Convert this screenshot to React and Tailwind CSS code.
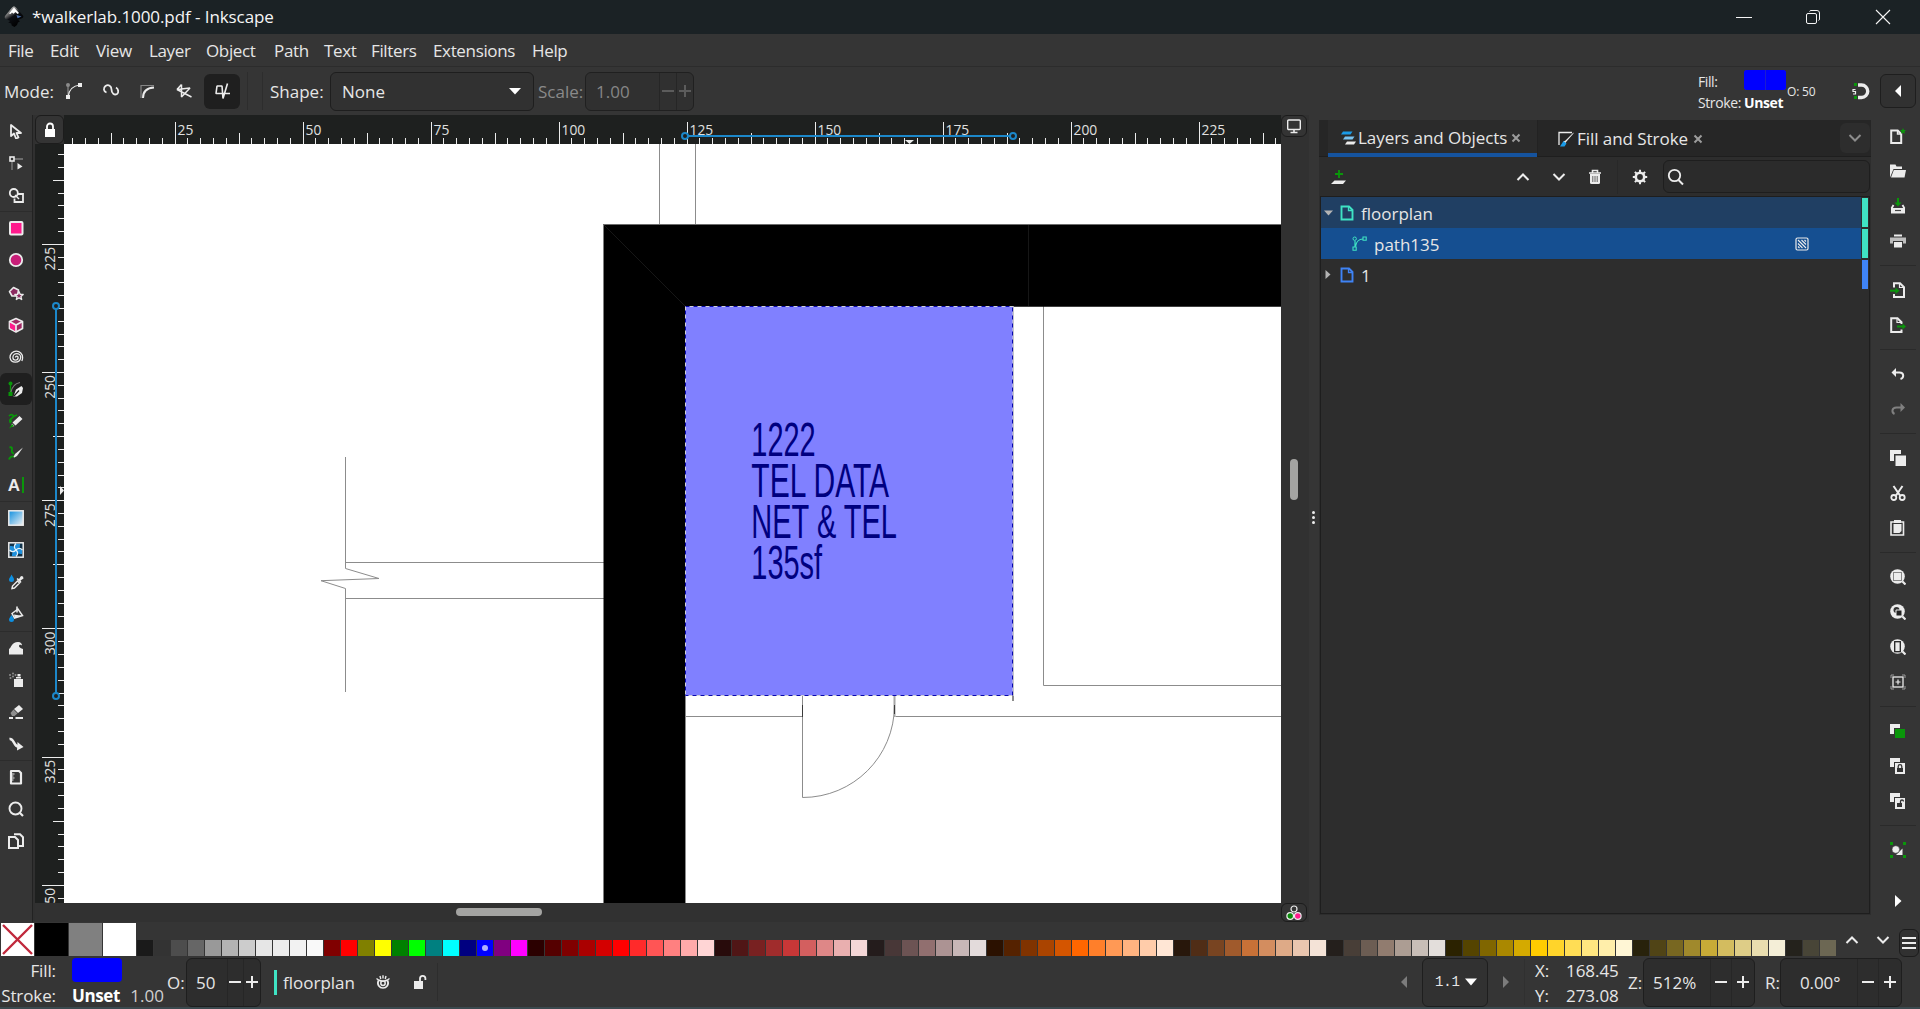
import React from "react";

const PALETTE = (
  "1a1a1a 333333 4d4d4d 666666 999999 b3b3b3 cccccc e6e6e6 ececec f2f2f2 f9f9f9 " +
  "800000 ff0000 808000 ffff00 008000 00ff00 008080 00ffff 000080 0000ff 800080 ff00ff " +
  "2b0000 550000 800000 aa0000 d40000 ff0000 ff2a2a ff5555 ff8080 ffaaaa ffd5d5 " +
  "280b0b 501616 782121 a02c2c c83737 d35f5f de8787 e9afaf f4d7d7 " +
  "241c1c 483737 6c5353 916f6f ac9393 c8b7b7 e3dbdb " +
  "2b1100 552200 803300 aa4400 d45500 ff6600 ff7f2a ff9955 ffb380 ffccaa ffe6d5 " +
  "28170b 502d16 784421 a05a2c c87137 d38d5f deaa87 e9c6af f4e3d7 " +
  "241f1c 483e37 6c5d53 917c6f ac9d93 c8beb7 e3dedb " +
  "2b2200 554400 806600 aa8800 d4aa00 ffcc00 ffd42a ffdd55 ffe680 ffeeaa fff6d5 " +
  "28220b 504416 786721 a0892c c8ab37 d3bc5f decd87 e9ddaf f4eed7 " +
  "24221c 484537 6c6753"
).split(" ");

const W = "#ececec";
const G = "#0a960a";

function Svg({ s = 16, w, h, children, className = "" }) {
  return (
    <svg
      width={w || s}
      height={h || s}
      viewBox={`0 0 ${w || s} ${h || s}`}
      fill="none"
      className={"block shrink-0 " + className}
    >
      {children}
    </svg>
  );
}

/* ---------- title bar ---------- */

function TitleBar() {
  return (
    <div className="flex h-[34px] items-center bg-[#1b2225] pl-1 text-[#f5f5f5]">
      <Svg w={20} h={22}>
        <defs>
          <linearGradient id="ink" x1="0" y1="0" x2="0.6" y2="1">
            <stop offset="0" stopColor="#fff" />
            <stop offset="0.35" stopColor="#777" />
            <stop offset="0.55" stopColor="#0b0d12" />
            <stop offset="1" stopColor="#000" />
          </linearGradient>
        </defs>
        <path d="M10 0.5c1 0 1.7.6 2.5 1.5l6.3 7.3c1 1.3.7 2.4-.8 3l-4 1.4 2 1.6-2 1.2-1 2.5-2.5 2-2.8-1.5-.5-2-3-1 2-1.6-4.200-1.900C.6 12.300.3 10.600 1.400 9.400L7.600 2C8.300 1.100 9 .5 10 .5z" fill="url(#ink)" />
        <path d="M10 1.500 5 7.500l1.500.5L8 6.500l1.500 1.200L11.500 6l2 2 1.500-1z" fill="#fff" />
        <path d="m12.500 9 5 1.500-4 1.800z" fill="#4a6ea8" />
      </Svg>
      <span className="ml-[8px] text-[17px] tracking-[-0.08px]">*walkerlab.1000.pdf - Inkscape</span>
      <div className="ml-auto flex items-center">
        <Svg w={16} h={16}><path d="M0 8.500h16" stroke="#f5f5f5" /></Svg>
        <Svg w={16} h={16} className="ml-[53px]">
          <rect x="1.500" y="4.500" width="10" height="10" rx="1.500" stroke="#f5f5f5" />
          <path d="M4.500 2.500q.4-1 1.500-1h6q2.500 0 2.500 2.500v6q0 1.100-1 1.500" stroke="#f5f5f5" />
        </Svg>
        <Svg w={16} h={16} className="mr-[29px] ml-[54px]"><path d="M1 1l14 14M15 1 1 15" stroke="#f5f5f5" strokeWidth="1.100" /></Svg>
      </div>
    </div>
  );
}

/* ---------- menu ---------- */

function MenuBar() {
  return (
    <div className="flex h-[33px] items-center border-b border-[#2c2c2c] pt-[2px] pl-[8px] text-[17px] tracking-[-0.35px]">
      <span className="w-[42px]">File</span>
      <span className="w-[46px]">Edit</span>
      <span className="w-[53px]">View</span>
      <span className="w-[57px]">Layer</span>
      <span className="w-[68px]">Object</span>
      <span className="w-[50px]">Path</span>
      <span className="w-[47px]">Text</span>
      <span className="w-[62px]">Filters</span>
      <span className="w-[99px]">Extensions</span>
      <span>Help</span>
    </div>
  );
}

/* ---------- tool options ---------- */

function PlusMinus({ gap, dim }) {
  const c = dim ? "#5c5c5c" : W;
  return gap ? (
    <>
      <div className="flex w-[21px] items-center justify-center self-stretch border-l border-[#262626]">
        <Svg s={14}><path d="M1 7h12" stroke={c} strokeWidth="2" /></Svg>
      </div>
      <div className="flex w-[23px] items-center justify-center self-stretch border-l border-[#262626]">
        <Svg s={14}><path d="M1 7h12M7 1v12" stroke={c} strokeWidth="2" /></Svg>
      </div>
    </>
  ) : (
    <>
      <div className="flex w-[17px] items-center justify-center self-stretch border-l border-[#262626]">
        <Svg s={14}><path d="M1 7h12" stroke={c} strokeWidth="2" /></Svg>
      </div>
      <div className="flex w-[17px] items-center justify-center self-stretch border-l border-[#262626]">
        <Svg s={14}><path d="M1 7h12M7 1v12" stroke={c} strokeWidth="2" /></Svg>
      </div>
    </>
  );
}

function ToolOptions() {
  return (
    <div className="flex h-[48px] items-center pl-1 text-[17px]">
      <span className="w-[61px] pt-px">Mode:</span>
      <Svg s={18}>
        <path d="M3 15V4" stroke="#8b8b8b" strokeWidth="1.200" />
        <circle cx="3" cy="3" r="2" fill="#8b8b8b" />
        <path d="M3 15C4 7 9 3.500 15 3" stroke={W} strokeWidth="1.200" />
        <path d="M1 13h4v4H1zM13 1h4v4h-4z" fill={W} />
      </Svg>
      <Svg s={18} className="ml-[19px]">
        <path d="M4.500 10.500C1.500 9.500 1 6 3.500 4c3-2 6 0 6 3.500 0 4 3 6 5.500 4.500 2-1.500 1.500-5-1-6.500" stroke={W} strokeWidth="1.800" />
      </Svg>
      <Svg s={18} className="ml-[18px]">
        <path d="M3 16V3.500h13" stroke="#858585" strokeWidth="1.200" />
        <path d="M5 16c0-6 3-10 11-10.500" stroke={W} strokeWidth="2" />
      </Svg>
      <Svg s={18} className="ml-[19px]">
        <path d="M2 7.500 16.500 15M6.500 2.500v12.500L15 6 2 7.500 6.500 2.500" stroke={W} strokeWidth="1.500" strokeLinejoin="bevel" />
      </Svg>
      <div className="ml-[11px] flex h-[35px] w-[36px] items-center justify-center rounded-md bg-[#1f1f1f]">
        <Svg s={18}>
          <path d="M14.500 1.500 10 16.500 9 4H4L3 11.500h14" stroke={W} strokeWidth="1.600" strokeLinejoin="bevel" />
        </Svg>
      </div>
      <div className="ml-[7px] h-[38px] w-4 border-x border-[#2d2d2d]" />
      <span className="ml-[7px] w-[60px] pt-px">Shape:</span>
      <div className="flex h-[39px] w-[204px] items-center rounded-md border border-[#1e1e1e] bg-[#313131] px-[11px]">
        <span className="pt-px">None</span>
        <Svg w={14} h={8} className="ml-auto"><path d="M1 1h12L7 7.500z" fill="#fff" /></Svg>
      </div>
      <span className="ml-[4px] w-[47px] pt-px text-[#8a8a8a]">Scale:</span>
      <div className="flex h-[39px] w-[109px] items-center rounded-md border border-[#202020] bg-[#303030] pl-[10px] text-[#868686]">
        <span className="mr-auto pt-px">1.00</span>
        <PlusMinus dim />
      </div>
      <div className="ml-auto flex items-center">
        <div className="grid w-[46px] gap-0 pt-px text-[14px] leading-[21px] tracking-[-0.4px]">
          <span>Fill:</span>
          <span>Stroke:</span>
        </div>
        <div className="w-[42px] text-[14px]">
          <div className="flex h-[20px] gap-px overflow-hidden rounded-[3px] bg-[#1c1cd0]">
            <div className="flex-1 bg-[#0000ff]" />
            <div className="flex-1 bg-[#0000ff]" />
          </div>
          <div className="h-[22px] pt-[3px] leading-[20px] font-bold tracking-[-0.4px] text-white">Unset</div>
        </div>
        <span className="ml-[1px] w-[63px] pt-px text-[12px] tracking-[-0.2px]">O: 50</span>
        <Svg s={20} className="mr-[10px]">
          <path d="M8 4h3.500a6 6 0 0 1 0 12.500H8" stroke={W} strokeWidth="3.400" />
          <path d="M5.500 8.500H3v2h2.500V13H3" stroke={W} strokeWidth="1.200" />
          <path d="M4 2h3v3H4zM4 15h3v3H4z" fill={G} />
        </Svg>
        <div className="mr-[4px] flex h-[34px] w-[36px] items-center justify-center rounded-md border border-[#1e1e1e] bg-[#313131]">
          <Svg w={8} h={12}><path d="M7 0v12L1 6z" fill="#fff" /></Svg>
        </div>
      </div>
    </div>
  );
}

/* ---------- toolbox ---------- */

const TOOLS = [
  <g><path d="M3 2v11l3-2.500 2 5 2.500-1L8.500 10H13z" stroke={W} strokeWidth="1.800" strokeLinejoin="round" /></g>,
  <g><path d="M5 4h10M4 5v10" stroke="#808080" strokeWidth="1.300" /><rect x="2" y="2" width="4" height="4" fill="#353535" stroke={W} strokeWidth="1.600" /><path d="m9.500 8 5 3.500-5 3z" fill={W} /></g>,
  <g><circle cx="5.800" cy="6" r="4" stroke={W} strokeWidth="1.800" /><path d="M10 7h5v8H6.500v-3.500" stroke={W} strokeWidth="1.800" /><path d="m7 8 4 4" stroke={W} strokeWidth="1.500" /></g>,
  <g><rect x="2" y="2" width="12.500" height="12.500" rx="1" fill="#ff1a8c" stroke={W} strokeWidth="2" /></g>,
  <g><circle cx="8" cy="8" r="6.200" fill="#c81e78" stroke={W} strokeWidth="1.800" /></g>,
  <g><path d="M5.500 2.500 10.500 5l-1 6H4L1.500 6.500z" fill="#8c2a60" stroke={W} strokeWidth="1.600" strokeLinejoin="round" /><path d="m11 6.500 1.200 2.800 3 .2-2.300 2 .8 3-2.700-1.600-2.700 1.600.8-3-2.300-2 3-.2z" fill="#8c2a60" stroke={W} strokeWidth="1.300" strokeLinejoin="round" /></g>,
  <g><path d="M8 1.500 14.500 4.500v7L8 15l-6.500-3.500v-7z" fill="#a02864" stroke={W} strokeWidth="1.700" strokeLinejoin="round" /><path d="M1.800 5 8 8v6.500L2 11z" fill="#ff1a8c" /><path d="M1.500 4.500 8 8l6.500-3.500M8 8v7" stroke={W} strokeWidth="1.700" /></g>,
  <g><path d="M7.500 8.500a1.300 1.300 0 0 1 2.600 0a2.600 2.600 0 0 1-5.200 0a3.900 3.900 0 0 1 7.800 0a5.400 5.400 0 0 1-10.700 0a6.300 6.300 0 0 1 12.600 0c0 1.500-.3 2.500-.8 3.500" stroke={W} strokeWidth="1.300" /></g>,
  <g><path d="M2.500 3v11" stroke={G} strokeWidth="1.400" /><path d="M.500 11h4v4h-4z" fill={G} /><circle cx="2.500" cy="2.500" r="2" fill={G} /><path d="M3 11C4 6 7 2.500 12 1.500" stroke="#777" strokeWidth="1.200" /><path d="M5.500 15.500 8 8.500l5.500-3.500 1.500 2-1 5-5 3.500z" fill={W} /><path d="m6 15 5-5.500" stroke="#1f1f1f" strokeWidth="1.200" /></g>,
  <g><path d="M1 3c3-3 6 0 3 2s-3 4 0 3M9 2c-5 1-9 7-6 8" stroke={G} strokeWidth="1.700" /><path d="m11.500 3 3 3-7 6.500-3-3zM4 10.500l2.500 2.500L3 14z" fill={W} /><path d="M1 15.500 4 11l2 2z" fill={G} /></g>,
  <g><path d="M1.500 2.500C7 1 1 8 6 8.500M1 14.500c1-4 4-3 6-3" stroke={G} strokeWidth="1.900" /><path d="M15 2.500 9 11l-2.500 1.500L5.500 12 7 9z" fill={W} /></g>,
  null,
  <g><rect x=".800" y=".800" width="14.400" height="14.400" fill="url(#gr)" stroke={W} strokeWidth="1.500" /></g>,
  <g><rect x=".800" y=".800" width="14.400" height="14.400" fill="#12334a" stroke={W} strokeWidth="1.500" /><path d="M8 8C8 5 6 4 2 4v4c2 2 4 2 6 0zM8 8c3 0 4-2 4-6H8C6 4 6 6 8 8zM8 8c0 3 2 4 6 4V8c-2-2-4-2-6 0zM8 8c-3 0-4 2-4 6h4c2-2 2-4 0-6z" fill="#1e90dc" /><path d="M8 1.500c-2.500 2.500-2 4.500 0 6.500s2.500 4 0 6.500M1.500 8c2.500 2.500 4.500 2 6.500 0s4-2.500 6.500 0" stroke="#e5f3fb" strokeWidth="1.200" /></g>,
  <g><path d="M3.500.500C5 3 6 4 6 5.500a2.500 2.500 0 0 1-5 0C1 4 2.500 3 3.500.500z" fill="#0e8fe0" /><path d="m4 14.500.5-2.500 5-5 2 2-5 5z" stroke={W} strokeWidth="1.400" /><path d="m8.500 5 1-1 1.500 1 2-3 2 .5.500 2-3 2 1 1.500-1 1z" fill={W} /></g>,
  <g><path d="m4 7.500 6-4.500 4.500 6.500L6.500 12z" stroke={W} strokeWidth="1.500" /><path d="m6 8.500 7.500 1.200-7 2z" fill={W} /><path d="M9 .5v6" stroke={W} strokeWidth="1.600" /><path d="M3.500 9C4.500 11 6 12 6 13.500a2.500 2.500 0 0 1-5 0C1 12 2.500 11 3.500 9z" fill="#0e8fe0" /></g>,
  <g><path d="M1 14.500V9C3 8.500 3.500 2 10 2c3 0 4 2 4 3.500-1-1.200-3-1-3 .5 0 2 4 3 4 3v5.500z" fill={W} /></g>,
  <g><path d="M6 7h9v8H6zM8 5h5v1.500H8zM9.500 2h3v2.500h-3z" fill={W} /><g fill="#8f8f8f"><circle cx="2" cy="3" r="1" /><circle cx="5" cy="1.500" r="1" /><circle cx="5" cy="4.500" r="1" /><circle cx="7.500" cy="3" r="1" /><circle cx="2.500" cy="6" r="1" /></g></g>,
  <g><path d="m6 5 5-4 4 4-5 4z" fill={W} /><path d="m5.500 5.500 4 4-3 2.500H4L2.500 9z" fill="#8f8f8f" /><path d="M1 14h4M7.500 14H15" stroke={W} strokeWidth="2" /></g>,
  <g><path d="M1.500 3c5-1 4 8 9 7.500" stroke={W} strokeWidth="2.400" /><path d="m9.500 6 6 5-6.500 3.500z" fill={W} /></g>,
  <g><path d="M3 2h8l2 2v10.500H3z" stroke={W} strokeWidth="2.200" strokeLinejoin="round" /><path d="M3 5h3.500M3 7h2.500M3 9h3.500M3 11h2.500" stroke={W} /></g>,
  <g><circle cx="7.500" cy="7.500" r="6" stroke={W} strokeWidth="1.900" /><path d="m12 12 3 3" stroke={W} strokeWidth="2.200" /></g>,
  <g><path d="M1 4h6l3 3v8H1z" stroke={W} strokeWidth="2" /><path d="M6 1.200h6l3 3V13h-4" stroke={W} strokeWidth="2" /></g>,
];

function Tool({ i }) {
  return (
    <div className={"flex h-[32.1px] items-center justify-center " + (i === 8 ? "rounded-md bg-[#1f1f1f]" : "")}>
      {i === 11 ? (
        <div className="flex items-center gap-[2px]">
          <span className="font-['Liberation_Sans'] text-[17px] leading-none font-bold text-[#ececec]">A</span>
          <div className="h-4 w-[2px] bg-[#0a960a]" />
        </div>
      ) : (
        <Svg s={16}>{TOOLS[i]}</Svg>
      )}
    </div>
  );
}

function Toolbox() {
  const range = (a, b) => Array.from({ length: b - a }, (_, k) => <Tool key={k} i={a + k} />);
  return (
    <div className="w-[33px] shrink-0 border-r border-[#222222]">
      <svg className="absolute h-0 w-0">
        <defs>
          <linearGradient id="gr" x1="0" y1="0" x2="1" y2="1">
            <stop offset="0" stopColor="#0e8fe0" />
            <stop offset="1" stopColor="#f2f2f2" />
          </linearGradient>
        </defs>
      </svg>
      {range(0, 3)}
      <div className="h-px bg-[#2c2c2c]" />
      {range(3, 12)}
      <div className="h-px bg-[#2c2c2c]" />
      {range(12, 16)}
      <div className="h-px bg-[#2c2c2c]" />
      {range(16, 20)}
      <div className="h-px bg-[#2c2c2c]" />
      {range(20, 23)}
    </div>
  );
}

/* ---------- rulers ---------- */

const RULER_FONT = "'Open Sans', 'Noto Sans', sans-serif";

function HRuler() {
  const ticks = [];
  for (let k = -8; k < 90; k++) {
    const x = Math.round(110.5 + 12.8 * k) + 0.5;
    const y = k % 10 === 0 ? 7 : k % 5 === 0 ? 18 : 23;
    if (x > 0) ticks.push(<path key={k} d={`M${x} ${y}V29`} stroke={W} />);
  }
  return (
    <Svg w={1217} h={29} className="bg-[#1e201f]">
      {ticks}
      {[25, 50, 75, 100, 125, 150, 175, 200, 225].map((n, i) => (
        <text key={n} x={113.5 + 128 * i} y={20} fontSize="13.8" fontFamily={RULER_FONT} fill="#e0e0e0" textLength={String(n).length * 7.9} lengthAdjust="spacingAndGlyphs">{n}</text>
      ))}
      <path d="M624 21H946" stroke="#1c87c9" strokeWidth="2" />
      <circle cx="621" cy="21" r="3" stroke="#1c87c9" strokeWidth="2" />
      <circle cx="949" cy="21" r="3" stroke="#1c87c9" strokeWidth="2" />
      <path d="M841 25h9l-4.500 4z" fill={W} />
    </Svg>
  );
}

function VRuler() {
  const ticks = [];
  for (let k = -8; k < 60; k++) {
    const y = Math.round(99.800 + 12.82 * k) + 0.5;
    const x = k % 10 === 0 ? 7 : k % 5 === 0 ? 18 : 23;
    if (y > 2) ticks.push(<path key={k} d={`M${x} ${y}H29`} stroke={W} />);
  }
  return (
    <Svg w={29} h={759} className="bg-[#1e201f]">
      {ticks}
      {[225, 250, 275, 300, 325, 350].map((n, i) => (
        <text key={n} transform={`translate(20 ${126.500 + 128.200 * i}) rotate(-90)`} fontSize="14.500" fontFamily={RULER_FONT} fill="#e0e0e0" textLength="23.500" lengthAdjust="spacingAndGlyphs">{n}</text>
      ))}
      <path d="M21 165V549" stroke="#1c87c9" strokeWidth="2" />
      <circle cx="21" cy="162" r="3" stroke="#1c87c9" strokeWidth="2" />
      <circle cx="21" cy="552" r="3" stroke="#1c87c9" strokeWidth="2" />
      <path d="M25 342v9l4-4.500z" fill={W} />
    </Svg>
  );
}

/* ---------- drawing canvas ---------- */

function Canvas() {
  return (
    <svg width="1217" height="759" viewBox="64 144 1217 759" fill="none" className="block shrink-0 bg-white">
      <g stroke="#8c8c8c">
        <path d="M659.500 144V225M695.500 144V225" />
        <path d="M345.500 457V568.500L379 578.500 321 580.700 345.500 588.500V692M345.500 562.500H604M345.500 598.500H604" />
        <path d="M1043.500 306V685.500H1281" />
        <path d="M685 716.500H802.500M895.500 716.500H1281M802.500 695V797.500C853 797.500 894.500 757 894.500 705" />
        <path d="M894.500 695V717" stroke="#a5a5a5" strokeWidth="2" />
        <path d="M802.500 705V717M894.500 705V714" stroke="#3a3a3a" />
        <path d="M685.500 695V903" />
        <path d="M1013 695.500V701" strokeWidth="2" />
      </g>
      <path d="M603.500 224.500H1281V306.700H685V903H603.500z" fill="#000" />
      <path d="M603 224.500H1281" stroke="#6c6c6c" />
      <path d="M604 225 685 306M1028.500 225V306" stroke="#161616" />
      <rect x="685.500" y="306.500" width="327.500" height="389" fill="#8080ff" />
      <rect x="685.500" y="306.500" width="327.500" height="389" stroke="#d0d0d8" />
      <path d="M1013.500 306.500V695.500" stroke="#c4c4c8" />
      <path d="M685.500 306.500H1012.500V695.500H685.500z" stroke="#0a0ab0" strokeDasharray="4 4" />
      <g fill="#000080" fontFamily="'Liberation Sans', Arial, sans-serif" fontSize="47.500">
        <text transform="translate(751.300 456) scale(.61 1)">1222</text>
        <text transform="translate(751.300 497) scale(.632 1)">TEL DATA</text>
        <text transform="translate(751.300 538.200) scale(.611 1)">NET &amp; TEL</text>
        <text transform="translate(751.300 579.400) scale(.61 1)">135sf</text>
      </g>
    </svg>
  );
}

function Workspace() {
  return (
    <div className="grid shrink-0 grid-cols-[29px_1217px_28px] grid-rows-[29px_759px_19px] bg-[#313131]">
      <div className="flex items-center justify-center rounded-md border border-[#1c1c1c] bg-[#343434]">
        <Svg w={12} h={16}>
          <path d="M1 7h10v8H1z" fill="#fff" />
          <path d="M3 7.500V4.500a3 3 0 0 1 6 0v3" stroke="#fff" strokeWidth="1.800" />
        </Svg>
      </div>
      <HRuler />
      <div className="mr-[2px] mb-[7px] flex items-center justify-center rounded-md border border-[#1c1c1c] bg-[#343434]">
        <Svg w={16} h={16}>
          <rect x="1.700" y="2" width="12.600" height="9.500" rx="1" stroke={W} strokeWidth="1.400" />
          <path d="M8 11v3M4.500 14.500h7" stroke={W} strokeWidth="1.600" />
        </Svg>
      </div>
      <VRuler />
      <Canvas />
      <div className="flex justify-center pt-[315px] pr-[3px]">
        <div className="h-[41px] w-2 rounded-full bg-[#a4a4a2]" />
      </div>
      <div />
      <div className="flex pt-[5px] pl-[392px]">
        <div className="h-2 w-[86px] rounded-full bg-[#a4a4a2]" />
      </div>
      <div className="mr-[2px] flex items-center justify-center rounded-md border border-[#1c1c1c] bg-[#343434]">
        <Svg w={16} h={16}>
          <circle cx="8" cy="4" r="3" stroke={W} strokeWidth="1.200" />
          <circle cx="4.200" cy="11" r="3.300" fill="#0a8a0a" stroke={W} strokeWidth="1.200" />
          <circle cx="11.800" cy="11" r="3.300" fill="#ff1a8c" stroke={W} strokeWidth="1.200" />
        </Svg>
      </div>
    </div>
  );
}

/* ---------- dock ---------- */

function Chevron({ up, c = W, w = 14, sw = 2 }) {
  return (
    <Svg w={w} h={8}>
      <path d={up ? "M1.500 7 7 1.500 12.500 7" : "M1.500 1 7 6.500 12.500 1"} stroke={c} strokeWidth={sw} />
    </Svg>
  );
}

function CloseX({ className }) {
  return <Svg s={10} className={className}><path d="m1.500 1.500 7 7M8.500 1.500l-7 7" stroke="#9c9c9c" strokeWidth="2" /></Svg>;
}

function LayerDoc({ c }) {
  return (
    <Svg w={14} h={16}>
      <path d="M1.500 1.500h7.500l3.500 3.500v9.500h-11z" stroke={c} strokeWidth="1.900" />
      <path d="M8.500 1.500v4h4" stroke={c} strokeWidth="1.300" />
    </Svg>
  );
}

function Dock() {
  return (
    <div className="flex w-[552px] shrink-0 flex-col bg-[#2d2d2d] pb-px">
      <div className="flex h-[37px] border-b border-[#1e1e1e] bg-[#262626] pl-[9px]">
        <div className="flex h-[37px] w-[209px] items-center border-b-4 border-[#15539e] bg-[#2b2b2b] pt-[3px] pl-[12px]">
          <Svg s={16}>
            <path d="M3 1.500h9.500l-2 3H1z" fill="#1a9be8" />
            <path d="M5 6.500h9.500l-2 3H3z" fill="#7cc4f0" />
            <path d="M7 11.500h9l-2 3H5z" fill={W} />
          </Svg>
          <span className="ml-[2px] w-[149px] text-[17px] tracking-[-0.05px] whitespace-nowrap">Layers and Objects</span>
          <CloseX className="ml-[4px]" />
        </div>
        <div className="flex h-[36px] w-[180px] items-center border-l border-[#222] pt-px pl-[20px]">
          <Svg s={16}>
            <path d="M1 14V1.500h13" stroke={W} strokeWidth="1.300" />
            <path d="m15.500 1.500-8 8-2 1-.5 1.500 2 .5 1.500-2 7-8z" fill={W} />
            <path d="m5.500 10 3 2.500-2 3H2z" fill="#1a9be8" />
          </Svg>
          <span className="ml-[3px] w-[111px] text-[17px] tracking-[-0.05px] whitespace-nowrap">Fill and Stroke</span>
          <CloseX className="ml-[5px]" />
        </div>
        <div className="mt-[3px] mr-px ml-auto flex h-[30px] w-[30px] items-center justify-center rounded-md bg-[#2d2d2d]">
          <Chevron c="#8c8c8c" />
        </div>
      </div>
      <div className="flex h-[39px] items-center pl-[12px]">
        <Svg s={16}>
          <path d="M8 1v8M4 5h8" stroke={G} strokeWidth="1.900" />
          <path d="M3.500 11.500H15L12 15H0z" fill={W} />
        </Svg>
        <div className="ml-[169px] flex items-center">
          <Chevron up />
          <div className="ml-[22px]"><Chevron /></div>
          <Svg w={14} h={16} className="ml-[22px]">
            <path d="M1 4h12M4.500 3.500v-2h5v2" stroke={W} strokeWidth="1.600" />
            <path d="M2 5h10v8.500q0 1.500-1.500 1.500h-7Q2 15 2 13.500z" fill={W} />
            <path d="M4.800 7v6M7 7v6M9.200 7v6" stroke="#555" strokeWidth=".9" />
          </Svg>
        </div>
        <div className="ml-[15px] h-[34px] w-px bg-[#282828]" />
        <Svg s={16} className="ml-[14px]">
          <circle cx="8" cy="8" r="4.200" stroke={W} strokeWidth="2.600" />
          <path d="M8 .8v3M8 12.200v3M.800 8h3M12.200 8h3M2.900 2.900 5 5M11 11l2.100 2.100M2.900 13.100 5 11M11 5l2.100-2.100" stroke={W} strokeWidth="2" />
        </Svg>
        <div className="mr-px ml-auto flex h-[33px] w-[207px] items-center rounded-md border border-[#1e1e1e] bg-[#2b2b2b] pl-[3px]">
          <Svg s={18}>
            <circle cx="7.500" cy="7.500" r="5.700" stroke={W} strokeWidth="1.800" />
            <path d="m11.500 12 4.500 4.500" stroke={W} strokeWidth="2" />
          </Svg>
        </div>
      </div>
      <div className="mr-px ml-px flex-1 border border-[#1e1e1e] text-[17px]">
        <div className="flex h-[31px]">
          <div className="flex flex-1 items-center bg-[#203f63] pl-[3px]">
            <Svg w={9} h={6}><path d="M0 .5h9l-4.500 5z" fill="#b4b4b4" /></Svg>
            <div className="w-[7px]" />
            <LayerDoc c="#3fe3c4" />
            <span className="ml-[7px] pt-[2px]">floorplan</span>
          </div>
          <div className="my-[1px] mr-[1px] ml-[1px] w-[6px] bg-[#3fe3c4]" />
        </div>
        <div className="flex h-[31px]">
          <div className="flex flex-1 items-center bg-[#154f91] pl-[31px]">
            <Svg s={15}>
              <path d="M3 5v6M3.500 10.500C4 6 7 3 11 3" stroke="#3fe3c4" strokeWidth="1.200" />
              <circle cx="2.700" cy="2.700" r="1.700" stroke="#3fe3c4" />
              <path d="M1 11h3.200v3.200H1zM11 1h3.200v3.200H11z" stroke="#3fe3c4" strokeWidth="1.100" />
            </Svg>
            <span className="ml-[7px] pt-[2px]">path135</span>
            <Svg s={14} className="mr-[52px] ml-auto">
              <rect x="1" y="1" width="12" height="12" rx="1.500" stroke={W} strokeWidth="1.200" />
              <path d="m3 3 8 8M6.500 3 11 7.500M3 6.500 7.500 11M9.500 3 11 4.500M3 9.500 4.500 11" stroke={W} strokeWidth="1.100" />
            </Svg>
          </div>
          <div className="my-[1px] mr-[1px] ml-[1px] w-[6px] bg-[#3fe3c4]" />
        </div>
        <div className="flex h-[31px]">
          <div className="flex flex-1 items-center pl-[4px]">
            <Svg w={6} h={9}><path d="M.500 0v9l5-4.500z" fill="#b4b4b4" /></Svg>
            <div className="w-[9px]" />
            <LayerDoc c="#3f83f5" />
            <span className="ml-[7px] pt-[2px]">1</span>
          </div>
          <div className="my-[1px] mr-[1px] ml-[1px] w-[6px] bg-[#3f83f5]" />
        </div>
      </div>
    </div>
  );
}

/* ---------- command bar ---------- */

const Mag = ({ children }) => (
  <g><circle cx="7.500" cy="7.500" r="7.300" fill={W} /><path d="m12.500 12.500 3 3" stroke={W} strokeWidth="2.200" />{children}</g>
);

const COMMANDS = [
  <g><path d="M1.200 2.500h6.500l3.500 3.500v9h-10z" stroke={W} strokeWidth="2" /><path d="M7.500 2v4h4" stroke={W} strokeWidth="1.400" /><path d="m13 0 .9 1.900 2.100.2-1.500 1.500.4 2.100L13 4.700l-1.900 1 .4-2.100L10 2.100l2.100-.2z" fill={G} /></g>,
  <g><path d="M0 14.500V1.500h5.500l1 2H12V6H3.500z" fill={W} /><path d="M3.800 7H16l-1.500 7.500H1z" fill={W} /></g>,
  <g><path d="M8 0v6" stroke={G} strokeWidth="2" /><path d="M4.500 4.500h7L8 8.500z" fill={G} /><path d="M1 10h14v5.500H1z" fill={W} /><path d="M3.500 7 1.500 10.500M12.500 7l2 3.500" stroke={W} strokeWidth="1.800" /><path d="M5 12.500h6" stroke="#444" strokeWidth="1.200" /></g>,
  <g><path d="M4 1.500h8v2H4z" fill={W} /><path d="M0 4.500h16v6h-3V8H3v2.500H0z" fill="#bdbdbd" /><path d="M4 9h8v5.500H4z" fill={W} /></g>,
  null,
  <g><path d="M4 5.500V1.200h6l4 4V15H4v-3" stroke={W} strokeWidth="2" /><path d="M9.500 1v4.500H14" stroke={W} strokeWidth="1.200" /><path d="M0 8.700h7" stroke={G} strokeWidth="2" /><path d="M5.500 5.500v6.500L9.500 8.700z" fill={G} /></g>,
  <g><path d="M11.500 7V5.200l-4-4H1.200V15h10.300v-2.500" stroke={W} strokeWidth="2" /><path d="M7 1v4.500h4.500" stroke={W} strokeWidth="1.200" /><path d="M7 9.500h7" stroke={G} strokeWidth="2" /><path d="M12.500 6.500v6L16 9.500z" fill={G} /></g>,
  null,
  <g><path d="M3 6.500h6.500c5 0 4.500 5.500 1 6.500" stroke={W} strokeWidth="2" /><path d="M6 2v9L1.500 6.500z" fill={W} /></g>,
  <g><path d="M13 6.500H6.500c-5 0-5 5-2 6.500" stroke="#808080" strokeWidth="2" /><path d="M10.500 2v9L15 6.500z" fill="#808080" /></g>,
  null,
  <g><path d="M0 0h11v4H4v7H0z" fill={W} /><path d="M5.500 5.500H16V16H5.500z" fill={W} /></g>,
  <g><path d="m3.500 1 6.500 9.500M12.500 1 6 10.500" stroke={W} strokeWidth="2" /><circle cx="3.800" cy="12.500" r="2.500" stroke={W} strokeWidth="1.800" /><circle cx="12.200" cy="12.500" r="2.500" stroke={W} strokeWidth="1.800" /></g>,
  <g><path d="M1 2h12.500v13H1z" stroke={W} strokeWidth="1.600" /><path d="M4 0h7v3H4z" fill={W} /><path d="M3.500 4h8v7l-2 2h-6z" fill={W} /></g>,
  null,
  <Mag><rect x="3.500" y="3.500" width="8" height="8" stroke="#222" strokeDasharray="1 1" /></Mag>,
  <Mag><circle cx="6.500" cy="6" r="3" fill="#333" /><path d="M6 6h6v6H6z" fill="#222" stroke={W} /></Mag>,
  <Mag><rect x="4.700" y="2.700" width="5.600" height="10" stroke="#222" strokeWidth="1.300" /></Mag>,
  <g><path d="M1 4V1h3M12 1h3v3M15 12v3h-3M4 15H1v-3" stroke="#999" /><rect x="3" y="3" width="10" height="10" stroke={W} strokeWidth="1.300" /><path d="M8 5.500v5M5.500 8h5" stroke={W} strokeWidth="1.200" /></g>,
  null,
  <g><path d="M0 1h10v4H4v6H0z" fill={W} /><path d="M5 6h10v9H5z" fill={G} /></g>,
  <g><path d="M0 0h10v4H4v5H0z" fill={W} /><path d="M5 5h10v11H5z" fill={W} /><path d="M7 10h6v4H7z" fill="#333" /><path d="M8.200 10V8.500a1.800 1.800 0 0 1 3.600 0V10" stroke="#333" strokeWidth="1.300" /></g>,
  <g><path d="M0 0h10v4H4v5H0z" fill={W} /><path d="M5 5h10v11H5z" fill={W} /><path d="M7 10h5v4H7z" fill="#333" /><path d="M10.500 10V8.500a1.500 1.500 0 0 1 3 0" stroke="#333" strokeWidth="1.300" /></g>,
  null,
  <g><path d="M0 0h3v3H0zM13 0h3v3h-3zM0 13h3v3H0zM13 13h3v3h-3z" fill={G} /><path d="M12.500 6.500v6.500H6z" fill={W} /><circle cx="5.800" cy="7.500" r="3.800" fill={W} stroke="#353535" strokeWidth=".6" /></g>,
];

function CommandBar() {
  return (
    <div className="-mt-px flex w-[49px] shrink-0 flex-col pl-[9px]">
      {COMMANDS.map((c, i) =>
        c ? (
          <div key={i} className="flex h-[34.75px] w-9 items-center justify-center"><Svg s={16}>{c}</Svg></div>
        ) : (
          <div key={i} className="flex h-[14.7px] w-9 items-center"><div className="h-px w-full bg-[#2a2a2a]" /></div>
        )
      )}
      <div className="mt-[28px] ml-[15px]"><Svg w={7} h={12}><path d="M0 0v12l6.500-6z" fill="#fff" /></Svg></div>
    </div>
  );
}

/* ---------- palette ---------- */

function PaletteBar() {
  return (
    <div className="flex h-[34px] items-end pl-px">
      <div className="flex h-[33px] gap-px self-start pt-0">
        <svg width="33" height="33" className="block bg-white"><path d="m2 2 29 29M31 2 2 31" stroke="#c0283c" strokeWidth="2.400" /></svg>
        <div className="w-[33px] bg-black" />
        <div className="w-[33px] bg-[#808080]" />
        <div className="w-[33px] bg-white" />
      </div>
      <div className="mb-px ml-px flex h-4 w-[1699.500px]">
        {PALETTE.map((c, i) => (
          <div key={i} className="mr-[0.7px] flex flex-1 items-center justify-center" style={{ backgroundColor: "#" + c }}>
            {i === 20 && <div className="h-[6px] w-[6px] rounded-full bg-[#b0b0ff]" />}
          </div>
        ))}
      </div>
      <div className="flex items-center self-center pl-[8px]">
        <Chevron up />
        <div className="ml-[17px]"><Chevron /></div>
      </div>
      <div className="mr-[1px] ml-auto flex h-[28px] w-[20px] flex-col items-center justify-center gap-[3px] rounded-md border border-[#1c1c1c] bg-[#313131]">
        <div className="h-[2px] w-[14px] bg-[#ececec]" />
        <div className="h-[2px] w-[14px] bg-[#ececec]" />
        <div className="h-[2px] w-[14px] bg-[#ececec]" />
      </div>
    </div>
  );
}

/* ---------- status bar ---------- */

function StatusBar() {
  const box = "flex h-[49px] items-center rounded-md border border-[#1e1e1e] ";
  return (
    <div className="flex h-[50px] items-center text-[17px]">
      <div className="flex w-[56px] flex-col items-end pt-px text-right leading-[25px] tracking-[-0.1px]">
        <span>Fill:</span>
        <span>Stroke:</span>
      </div>
      <div className="ml-[16px] h-[50px] w-[95px]">
        <div className="mt-px h-6 w-[50px] rounded-[4px] bg-[#0000ff]" />
        <div className="flex justify-between pt-px pr-[3px] leading-[25px]">
          <span className="font-bold tracking-[-0.4px] text-white">Unset</span>
          <span className="text-[#d0d0d0]">1.00</span>
        </div>
      </div>
      <span className="w-[19px] pt-px">O:</span>
      <div className={box + "w-[75px] bg-[#2d2d2d]"}>
        <span className="w-[40px] pt-px pl-[9px]">50</span>
        <PlusMinus />
      </div>
      <div className="ml-[13px] h-[25px] w-[3px] bg-[#3fe3c4]" />
      <span className="ml-[6px] w-[92px] pt-px">floorplan</span>
      <Svg w={16} h={16}>
        <path d="M1.500 4.500 3.500 6c3 1.500 6 1.500 9 0l2-1.500M5 2l.8 3M8 1.200V4.500M11 2l-.8 3" stroke={W} strokeWidth="1.400" />
        <path d="M3.500 6.500C1.500 10.500 4.500 14 8 14s6.500-3.500 4.500-7.500" stroke={W} strokeWidth="1.700" />
        <circle cx="8" cy="9.300" r="2.200" stroke={W} strokeWidth="1.500" />
      </Svg>
      <Svg w={16} h={16} className="ml-[21px]">
        <path d="M2 7h9v8H2z" fill={W} />
        <path d="M8 7.500V4.500a2.700 2.700 0 0 1 5.400 0V6" stroke={W} strokeWidth="1.800" />
      </Svg>
      <div className="ml-[9px] h-[38px] w-px bg-[#2d2d2d]" />
      <div className="ml-auto flex items-center">
        <Svg w={6} h={12}><path d="M6 0v12L0 6z" fill="#7c7c7c" /></Svg>
        <div className={box + "ml-[15px] w-[66px] bg-[#313131] pl-[12px]"}>
          <span className="font-['Liberation_Mono',monospace] text-[14px] tracking-[-0.2px]">1.1</span>
          <Svg w={12} h={8} className="ml-[5px]"><path d="M0 .5h12L6 7.500z" fill="#fff" /></Svg>
        </div>
        <Svg w={6} h={12} className="ml-[15px]"><path d="M0 0v12l6-6z" fill="#7c7c7c" /></Svg>
        <div className="ml-[15px] h-[46px] w-px bg-[#303030]" />
        <div className="ml-[10px] w-[31px] pt-[2px] leading-[25px]"><div>X:</div><div>Y:</div></div>
        <div className="w-[62px] pt-[2px] leading-[25px] tracking-[-0.05px]"><div>168.45</div><div>273.08</div></div>
        <span className="w-[15px] pt-px">Z:</span>
        <div className={box + "w-[112px] justify-end bg-[#2d2d2d]"}>
          <span className="mr-auto pt-px pl-[9px]">512%</span>
          <PlusMinus gap />
        </div>
        <span className="ml-[10px] w-[15px] pt-px">R:</span>
        <div className={box + "mr-[18px] w-[122px] bg-[#2d2d2d]"}>
          <span className="mr-auto pt-px pl-[19px] tracking-[-0.1px]">0.00°</span>
          <PlusMinus gap />
        </div>
      </div>
    </div>
  );
}

export default function App() {
  return (
    <div className="flex h-[1009px] w-[1920px] flex-col overflow-hidden bg-[#353535] font-['Open_Sans','Noto_Sans',sans-serif] leading-normal text-[#e6e6e6]">
      <TitleBar />
      <MenuBar />
      <ToolOptions />
      <div className="flex h-[807px]">
        <Toolbox />
        <div className="w-[2px] shrink-0 bg-[#303030]" />
        <Workspace />
        <div className="flex w-[10px] shrink-0 flex-col items-center pt-[396px] pr-[2px]">
          <div className="grid gap-[2px]">
            <div className="h-[3px] w-[3px] rounded-full bg-[#ececec]" />
            <div className="h-[3px] w-[3px] rounded-full bg-[#ececec]" />
            <div className="h-[3px] w-[3px] rounded-full bg-[#ececec]" />
          </div>
        </div>
        <div className="flex h-[800px] pt-[5px]">
          <Dock />
          <CommandBar />
        </div>
      </div>
      <div className="h-px" />
      <PaletteBar />
      <StatusBar />
      <div className="h-[2px] bg-[#3b494e]" />
    </div>
  );
}
